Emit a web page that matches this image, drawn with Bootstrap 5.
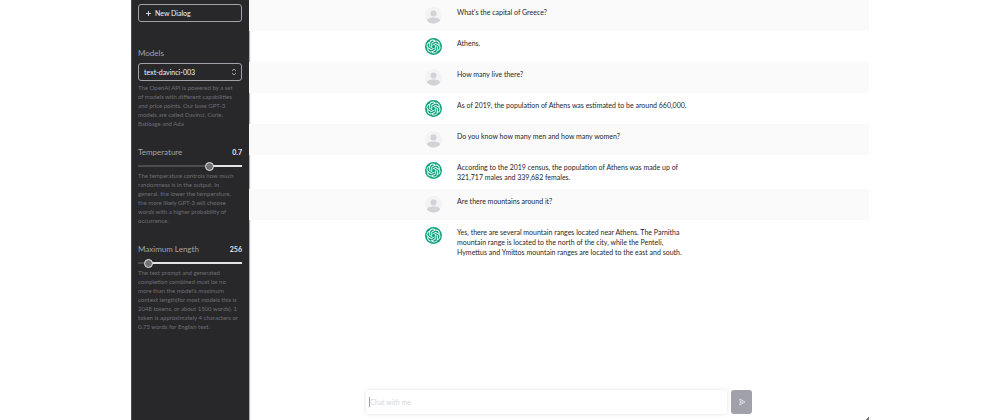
<!DOCTYPE html>
<html lang="en">
<head>
<meta charset="utf-8">
<meta name="viewport" content="width=device-width, initial-scale=1">
<title>Chat</title>
<link href="https://cdn.jsdelivr.net/npm/bootstrap@5.3.0/dist/css/bootstrap.min.css" rel="stylesheet">
<style>
body { font-family: Lato, "Open Sans", sans-serif; font-size: 7px; line-height: 10px; color: #27272a; background: #fff; }
.shell { max-width: 738px; }
.side { flex: 0 0 118px; padding: 4px 7px 0 6px; background: #28282a; border-left: 1px solid #4a4a4e; box-shadow: 1px 0 1px #b4b4b8; color: #d4d4d8; }
.new-btn, .model-select { display: flex; align-items: center; width: 100%; height: 18px; font-size: 7px; line-height: 10px; color: #f4f4f5; background: transparent; border: 1px solid #a1a1aa; border-radius: 3px; }
.new-btn { padding: 0 6px; gap: 3px; }
.model-select { appearance: none; padding: 0 5px; }
.chevrons { right: 5px; top: 5px; pointer-events: none; }
.field-title { font-size: 8px; line-height: 10px; color: #a1a1aa; }
.field-value { font-size: 7px; line-height: 10px; color: #e4e4e7; font-weight: 700; }
.hint { font-size: 6px; line-height: 9px; color: #6e6e75; margin: 0; white-space: nowrap; }
.models { margin-top: 26px; }
.models .model-wrap { margin: 5px 0 2px; }
.tuning { margin-top: 19px; }
.slider { appearance: none; display: block; width: 100%; height: 10px; margin: 4px 0 0; background: linear-gradient(to right, #4b4b50 var(--at), #e4e4e7 var(--at)) center / 100% 2px no-repeat; }
.slider::-webkit-slider-thumb { appearance: none; width: 9px; height: 9px; border-radius: 50%; background: #71717a; border: 1px solid #e4e4e7; }
.turn { padding: 7px 0; }
.turn.from-user { background: #fafafa; }
.turn-body { max-width: 268px; gap: 15px; }
.avatar { flex: none; width: 17px; height: 17px; }
.turn p { margin: 0; white-space: nowrap; }
.composer { max-width: 386px; gap: 4px; margin-bottom: 6px; }
.chat-input { width: 100%; height: 24px; padding: 0 4px; font-size: 7px; line-height: 10px; color: #27272a; background: #fff; border: 0; border-radius: 3px; box-shadow: 0 0 4px rgba(0,0,0,.12); outline: 0; }
.chat-input::placeholder { color: #d3d7de; opacity: 1; }
.text-caret { left: 3px; top: 7px; width: 1px; height: 10px; background: #a1a1aa; }
.send-btn { flex: none; width: 21px; height: 24px; padding: 0; border: 0; border-radius: 3px; background: #a1a1aa; }
.grip { right: 0; bottom: 0; width: 3px; height: 3px; background: linear-gradient(135deg, transparent 50%, #77777b 50%); }
</style>
</head>
<body>
<svg width="0" height="0" class="position-absolute" aria-hidden="true">
  <symbol id="person" viewBox="0 0 34 34">
    <circle cx="17" cy="17" r="17" fill="#f3f3f4"/>
    <circle cx="17" cy="13" r="6" fill="#d2d2d7"/>
    <path d="M4 27c0-4 6-6 13-6s13 2 13 6c-3 4-8 6-13 6s-10-2-13-6z" fill="#d2d2d7"/>
  </symbol>
  <symbol id="bot" viewBox="0 0 34 34">
    <circle cx="17" cy="17" r="17" fill="#10a37f"/>
    <path transform="translate(3 3) scale(1.167)" fill="#fff" d="M22.2819 9.8211a5.9847 5.9847 0 0 0-.5157-4.9108 6.0462 6.0462 0 0 0-6.5098-2.9A6.0651 6.0651 0 0 0 4.9807 4.1818a5.9847 5.9847 0 0 0-3.9977 2.9 6.0462 6.0462 0 0 0 .7427 7.0966 5.98 5.98 0 0 0 .511 4.9107 6.051 6.051 0 0 0 6.5146 2.9001A5.9847 5.9847 0 0 0 13.2599 24a6.0557 6.0557 0 0 0 5.7718-4.2058 5.9894 5.9894 0 0 0 3.9977-2.9001 6.0557 6.0557 0 0 0-.7475-7.0729zm-9.022 12.6081a4.4755 4.4755 0 0 1-2.8764-1.0408l.1419-.0804 4.7783-2.7582a.7948.7948 0 0 0 .3927-.6813v-6.7369l2.02 1.1686a.071.071 0 0 1 .038.052v5.5826a4.504 4.504 0 0 1-4.4945 4.4944zm-9.6607-4.1254a4.4708 4.4708 0 0 1-.5346-3.0137l.142.0852 4.783 2.7582a.7712.7712 0 0 0 .7806 0l5.8428-3.3685v2.3324a.0804.0804 0 0 1-.0332.0615L9.74 19.9502a4.4992 4.4992 0 0 1-6.1408-1.6464zM2.3408 7.8956a4.485 4.485 0 0 1 2.3655-1.9728V11.6a.7664.7664 0 0 0 .3879.6765l5.8144 3.3543-2.0201 1.1685a.0757.0757 0 0 1-.071 0l-4.8303-2.7865A4.504 4.504 0 0 1 2.3408 7.872zm16.5963 3.8558L13.1038 8.364 15.1192 7.2a.0757.0757 0 0 1 .071 0l4.8303 2.7913a4.4944 4.4944 0 0 1-.6765 8.1042v-5.6772a.79.79 0 0 0-.407-.667zm2.0107-3.0231l-.142-.0852-4.7735-2.7818a.7759.7759 0 0 0-.7854 0L9.409 9.2297V6.8974a.0662.0662 0 0 1 .0284-.0615l4.8303-2.7866a4.4992 4.4992 0 0 1 6.6802 4.66zM8.3065 12.863l-2.02-1.1638a.0804.0804 0 0 1-.038-.0567V6.0742a4.4992 4.4992 0 0 1 7.3757-3.4537l-.142.0805L8.704 5.459a.7948.7948 0 0 0-.3927.6813zm1.0976-2.3654l2.602-1.4998 2.6069 1.4998v2.9994l-2.5974 1.4997-2.6067-1.4997Z"/>
  </symbol>
</svg>
<div class="shell d-flex mx-auto min-vh-100 position-relative">
  <aside class="side">
    <button type="button" class="new-btn">
      <svg width="7" height="7" viewBox="0 0 7 7" stroke="#d4d4d8" aria-hidden="true"><path d="M1 3.5h5M3.5 1v5"/></svg>
      <span>New Dialog</span>
    </button>
    <section class="models">
      <label class="field-title d-block" for="model">Models</label>
      <div class="model-wrap position-relative">
        <select id="model" class="model-select"><option>text-davinci-003</option></select>
        <svg class="chevrons position-absolute" width="6" height="8" viewBox="0 0 6 8" fill="none" stroke="#a1a1aa" aria-hidden="true"><path d="M1 3l2-2 2 2M1 5l2 2 2-2"/></svg>
      </div>
      <p class="hint">The OpenAI API is powered by a set<br>of models with different capabilities<br>and price points. Our base GPT-3<br>models are called Davinci, Curie,<br>Babbage and Ada</p>
    </section>
    <section class="tuning">
      <div class="d-flex justify-content-between">
        <label class="field-title" for="temp">Temperature</label>
        <output class="field-value" for="temp">0.7</output>
      </div>
      <input id="temp" class="slider" type="range" min="0" max="1" step="0.1" value="0.7" style="--at:68%">
      <p class="hint">The temperature controls how much<br>randomness is in the output. In<br>general, the lower the temperature,<br>the more likely GPT-3 will choose<br>words with a higher probability of<br>occurrence.</p>
    </section>
    <section class="tuning">
      <div class="d-flex justify-content-between">
        <label class="field-title" for="len">Maximum Length</label>
        <output class="field-value" for="len">256</output>
      </div>
      <input id="len" class="slider" type="range" min="1" max="4096" value="256" style="--at:10%">
      <p class="hint">The text prompt and generated<br>completion combined must be no<br>more than the model's maximum<br>context length(for most models this is<br>2048 tokens, or about 1500 words). 1<br>token is approximately 4 characters or<br>0.75 words for English text.</p>
    </section>
  </aside>
  <main class="d-flex flex-column flex-grow-1">
    <div class="flex-grow-1">
      <div class="turn from-user"><div class="turn-body d-flex mx-auto"><svg class="avatar"><use href="#person"/></svg><p>What's the capital of Greece?</p></div></div>
      <div class="turn"><div class="turn-body d-flex mx-auto"><svg class="avatar"><use href="#bot"/></svg><p>Athens.</p></div></div>
      <div class="turn from-user"><div class="turn-body d-flex mx-auto"><svg class="avatar"><use href="#person"/></svg><p>How many live there?</p></div></div>
      <div class="turn"><div class="turn-body d-flex mx-auto"><svg class="avatar"><use href="#bot"/></svg><p>As of 2019, the population of Athens was estimated to be around 660,000.</p></div></div>
      <div class="turn from-user"><div class="turn-body d-flex mx-auto"><svg class="avatar"><use href="#person"/></svg><p>Do you know how many men and how many women?</p></div></div>
      <div class="turn"><div class="turn-body d-flex mx-auto"><svg class="avatar"><use href="#bot"/></svg><p>According to the 2019 census, the population of Athens was made up of<br>321,717 males and 339,682 females.</p></div></div>
      <div class="turn from-user"><div class="turn-body d-flex mx-auto"><svg class="avatar"><use href="#person"/></svg><p>Are there mountains around it?</p></div></div>
      <div class="turn"><div class="turn-body d-flex mx-auto"><svg class="avatar"><use href="#bot"/></svg><p>Yes, there are several mountain ranges located near Athens. The Parnitha<br>mountain range is located to the north of the city, while the Penteli,<br>Hymettus and Ymittos mountain ranges are located to the east and south.</p></div></div>
    </div>
    <form class="composer d-flex mx-auto w-100">
      <div class="position-relative flex-grow-1">
        <input class="chat-input" type="text" placeholder="Chat with me" aria-label="Message">
        <span class="text-caret position-absolute"></span>
      </div>
      <button type="button" class="send-btn" aria-label="Send">
        <svg class="d-block mx-auto" width="8" height="8" viewBox="0 0 16 16" fill="none" stroke="#dcdce0" stroke-width="2" stroke-linejoin="round" aria-hidden="true"><path d="M3 2l11 6-11 6 2-6zM5 8h5"/></svg>
      </button>
    </form>
  </main>
  <span class="grip position-absolute"></span>
</div>
<script src="https://cdn.jsdelivr.net/npm/bootstrap@5.3.0/dist/js/bootstrap.bundle.min.js"></script>
</body>
</html>
